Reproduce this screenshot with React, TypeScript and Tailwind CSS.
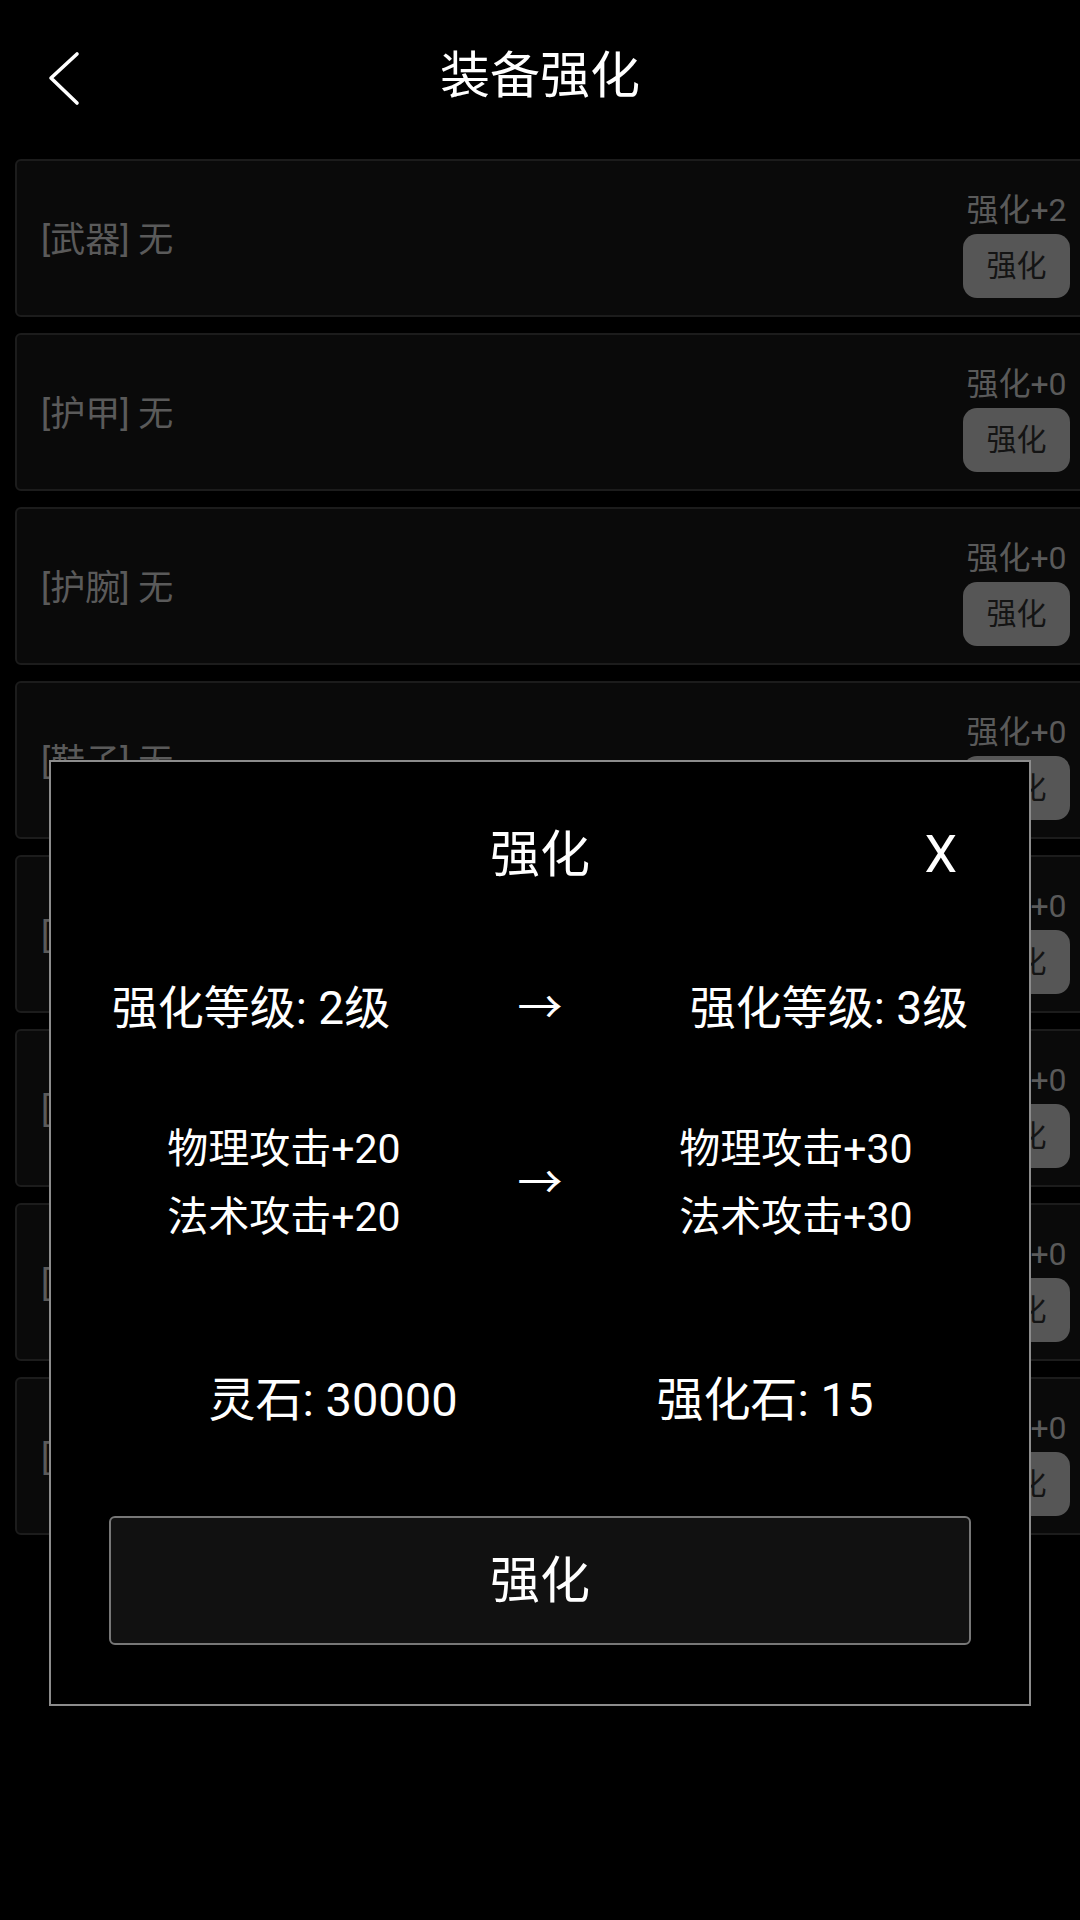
import React from "react";

const cards = [
  { slot: "武器", level: 2 },
  { slot: "护甲", level: 0 },
  { slot: "护腕", level: 0 },
  { slot: "鞋子", level: 0 },
  { slot: "头盔", level: 0 },
  { slot: "项链", level: 0 },
  { slot: "戒指", level: 0 },
  { slot: "腰带", level: 0 },
];

const font = { fontFamily: '"Roboto", "Noto Sans CJK SC", sans-serif' };

export default function App() {
  return (
    <div
      className="relative w-[1080px] h-[1920px] bg-black overflow-hidden font-['Roboto','Noto_Sans_CJK_SC',sans-serif]"
      style={font}
    >
      {/* Header */}
      <div className="relative h-[152px] flex items-center justify-center">
        <div className="absolute left-[42px] top-[48px] w-[44px] h-[60px] flex items-center justify-center">
          <svg width="40" height="60" viewBox="0 0 40 60" fill="none">
            <path d="M33 6 L7 30 L33 55" stroke="#ffffff" strokeWidth="3.6" strokeLinecap="round" strokeLinejoin="round" />
          </svg>
        </div>
        <div className="text-[50px] leading-none text-white">装备强化</div>
      </div>

      {/* Cards */}
      <div className="flex flex-col gap-[16px] pl-[15px] pt-[7px]">
        {cards.map((c) => (
          <div
            key={c.slot}
            className="w-[1085px] h-[158px] shrink-0 border-2 border-[#1c1c1c] bg-[#0a0a0a] rounded-[6px] flex items-center justify-between pl-[24px] pr-[28px]"
          >
            <div className="text-[35px] leading-none text-[#5a5a5a] mt-[4px]">[{c.slot}] 无</div>
            <div className="flex flex-col items-center mt-[11px]">
              <div className="text-[32px] leading-[40px] text-[#5a5a5a]">强化+{c.level}</div>
              <div className="mt-[4px] w-[107px] h-[64px] rounded-[14px] bg-[#565656] flex items-center justify-center text-[30px] text-[#141414]">
                强化
              </div>
            </div>
          </div>
        ))}
      </div>

      {/* Modal */}
      <div className="absolute left-[49px] top-[760px] w-[982px] h-[946px] border-2 border-[#8c8c8c] bg-black flex flex-col text-white">
        <div className="relative h-[186px] flex items-center justify-center">
          <div className="text-[50px] leading-none">强化</div>
          <div className="absolute right-[72px] top-0 h-full flex items-center text-[52px] leading-none">X</div>
        </div>

        <div className="h-[112px] pt-[8px] flex items-center">
          <div className="w-[400px] text-center text-[46px] leading-none">强化等级: 2级</div>
          <div className="flex-1 flex justify-center text-[45px] leading-none">→</div>
          <div className="w-[400px] text-center text-[46px] leading-none">强化等级: 3级</div>
        </div>

        <div className="h-[246px] flex items-center">
          <div className="w-[466px] flex flex-col items-center text-[41px] leading-[68px]">
            <div>物理攻击+20</div>
            <div>法术攻击+20</div>
          </div>
          <div className="flex-1 flex justify-center text-[45px] leading-none">→</div>
          <div className="w-[466px] flex flex-col items-center text-[41px] leading-[68px]">
            <div>物理攻击+30</div>
            <div>法术攻击+30</div>
          </div>
        </div>

        <div className="h-[186px] flex items-center">
          <div className="w-[564px] text-center text-[47px] leading-none">灵石: 30000</div>
          <div className="w-[300px] text-center text-[47px] leading-none">强化石: 15</div>
        </div>

        <div className="mx-[58px] mt-[24px] h-[129px] border-2 border-[#777777] bg-[#111111] rounded-[6px] flex items-center justify-center text-[50px] leading-none">
          强化
        </div>
      </div>
    </div>
  );
}
